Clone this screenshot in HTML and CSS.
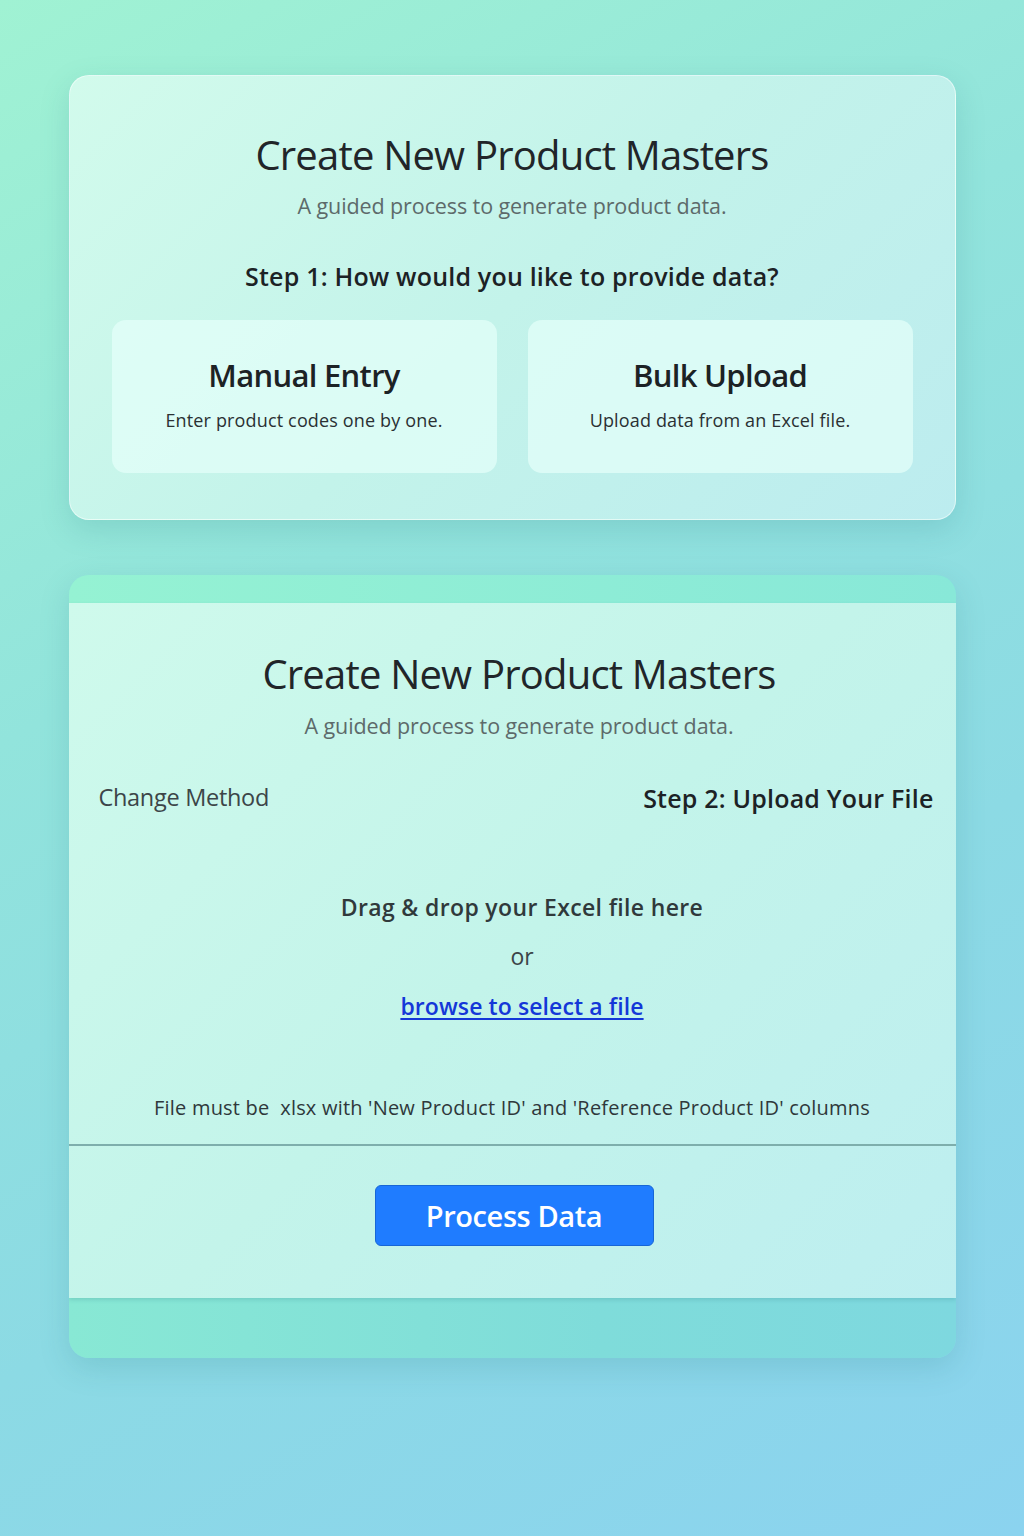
FILE: index.html
```html
<!DOCTYPE html>
<html lang="en">
<head>
<meta charset="utf-8">
<title>Create New Product Masters</title>
<link rel="stylesheet" href="styles.css">
</head>
<body>
<main class="page">
  <section class="card card-one">
    <h1 class="title">Create New Product Masters</h1>
    <p class="subtitle">A guided process to generate product data.</p>
    <h2 class="step">Step 1: How would you like to provide data?</h2>
    <div class="options">
      <div class="option">
        <h3 class="option-title">Manual Entry</h3>
        <p class="option-text">Enter product codes one by one.</p>
      </div>
      <div class="option">
        <h3 class="option-title">Bulk Upload</h3>
        <p class="option-text">Upload data from an Excel file.</p>
      </div>
    </div>
  </section>

  <section class="card card-two">
    <div class="band-top"></div>
    <div class="inner">
      <div class="inner-head">
        <h1 class="title">Create New Product Masters</h1>
        <p class="subtitle">A guided process to generate product data.</p>
        <div class="step-row">
          <span class="change">Change Method</span>
          <h2 class="step step-right">Step 2: Upload Your File</h2>
        </div>
      </div>
      <div class="drop">
        <p class="drop-main">Drag &amp; drop your Excel file here</p>
        <p class="drop-or">or</p>
        <a class="drop-link" href="#">browse to select a file</a>
      </div>
      <p class="hint">File must be &nbsp;xlsx with 'New Product ID' and 'Reference Product ID' columns</p>
      <div class="actions">
        <button class="btn" type="button">Process Data</button>
      </div>
    </div>
    <div class="band-bottom"></div>
  </section>
</main>
</body>
</html>
```

FILE: styles.css
```css
* { box-sizing: border-box; }
html, body { margin: 0; padding: 0; }
body {
  min-height: 1536px;
  background: linear-gradient(150deg, #a0f2d3 0%, #92e4dc 35%, #8cdae4 65%, #8bd3ef 100%);
  font-family: "Open Sans", "Noto Sans", sans-serif;
  color: #212529;
}
.page {
  width: 887px;
  margin: 0 auto;
  padding-top: 75px;
  display: flex;
  flex-direction: column;
  gap: 55px;
}
.card {
  border-radius: 20px;
  box-shadow: 0 10px 30px rgba(40, 120, 130, 0.18);
}
.card-one {
  background: linear-gradient(135deg, #d2fbec 0%, #c3f3ea 50%, #bcecef 100%);
  padding: 55px 42px 46px;
  text-align: center;
  border: 1px solid rgba(255,255,255,0.5);
}
.title {
  margin: 0;
  font-size: 40px;
  font-weight: 400;
  letter-spacing: -0.8px;
  line-height: 48px;
  color: #212529;
}
.subtitle {
  margin: 13px 0 0;
  font-size: 21.5px;
  line-height: 28px;
  color: #5d6a6a;
  letter-spacing: -0.1px;
}
.step {
  margin: 40px 0 0;
  font-size: 25px;
  font-weight: 600;
  line-height: 32px;
  letter-spacing: 0.2px;
  color: #1c2225;
}
.options {
  margin-top: 28px;
  display: grid;
  grid-template-columns: 1fr 1fr;
  gap: 31px;
}
.option {
  height: 153px;
  border-radius: 14px;
  background: rgba(228, 255, 250, 0.72);
  padding-top: 35px;
}
.option-title {
  margin: 0;
  font-size: 31px;
  font-weight: 600;
  line-height: 40px;
  letter-spacing: -0.7px;
  color: #1c2225;
}
.option-text {
  margin: 13px 0 0;
  font-size: 18px;
  line-height: 24px;
  letter-spacing: 0.15px;
  color: #2a3033;
}

.card-two {
  background: linear-gradient(90deg, #88e8d4 0%, #7fdcda 60%, #7ed8df 100%);
  overflow: hidden;
  display: flex;
  flex-direction: column;
}
.band-top {
  height: 28px;
  background: linear-gradient(90deg, #95f2d3 0%, #88e8d8 100%);
}
.band-bottom {
  height: 60px;
}
.inner {
  background: linear-gradient(135deg, #cffaec 0%, #c3f4ea 50%, #bdeef0 100%);
  box-shadow: 0 2px 4px rgba(40,120,130,0.2);
}
.inner-head {
  padding: 47px 22px 0 30px;
  text-align: center;
}
.inner-head .title { padding-left: 6px; }
.inner-head .subtitle { margin-top: 14px; padding-left: 6px; }
.step-row {
  margin-top: 39px;
  display: flex;
  justify-content: space-between;
  align-items: center;
}
.change {
  font-size: 23.5px;
  color: #3c4548;
  letter-spacing: -0.3px;
}
.step-right {
  margin: 0;
  font-size: 25px;
  padding-top: 3px;
}
.drop {
  margin-top: 77px;
  padding-left: 20px;
  text-align: center;
  display: flex;
  flex-direction: column;
  align-items: center;
}
.drop-main {
  margin: 0;
  font-size: 23px;
  font-weight: 600;
  line-height: 32px;
  letter-spacing: 0.35px;
  color: #30393b;
}
.drop-or {
  margin: 17px 0 0;
  font-size: 23px;
  line-height: 32px;
  color: #3c4548;
}
.drop-link {
  margin-top: 18px;
  font-size: 23px;
  font-weight: 600;
  line-height: 32px;
  letter-spacing: 0.1px;
  color: #1437d8;
  text-decoration: underline;
  text-underline-offset: 3px;
}
.hint {
  margin: 72px 0 0;
  padding-bottom: 22px;
  text-align: center;
  font-size: 20px;
  line-height: 28px;
  letter-spacing: 0.2px;
  color: #2f383b;
  border-bottom: 2px solid #7eaeac;
}
.actions {
  padding: 39px 0 52px 4px;
  display: flex;
  justify-content: center;
}
.btn {
  width: 279px;
  height: 61px;
  border: 1px solid #1766d6;
  border-radius: 6px;
  background: #1f7cff;
  color: #ffffff;
  font-family: inherit;
  font-size: 29px;
  font-weight: 600;
  letter-spacing: -0.4px;
  cursor: pointer;
}
```
